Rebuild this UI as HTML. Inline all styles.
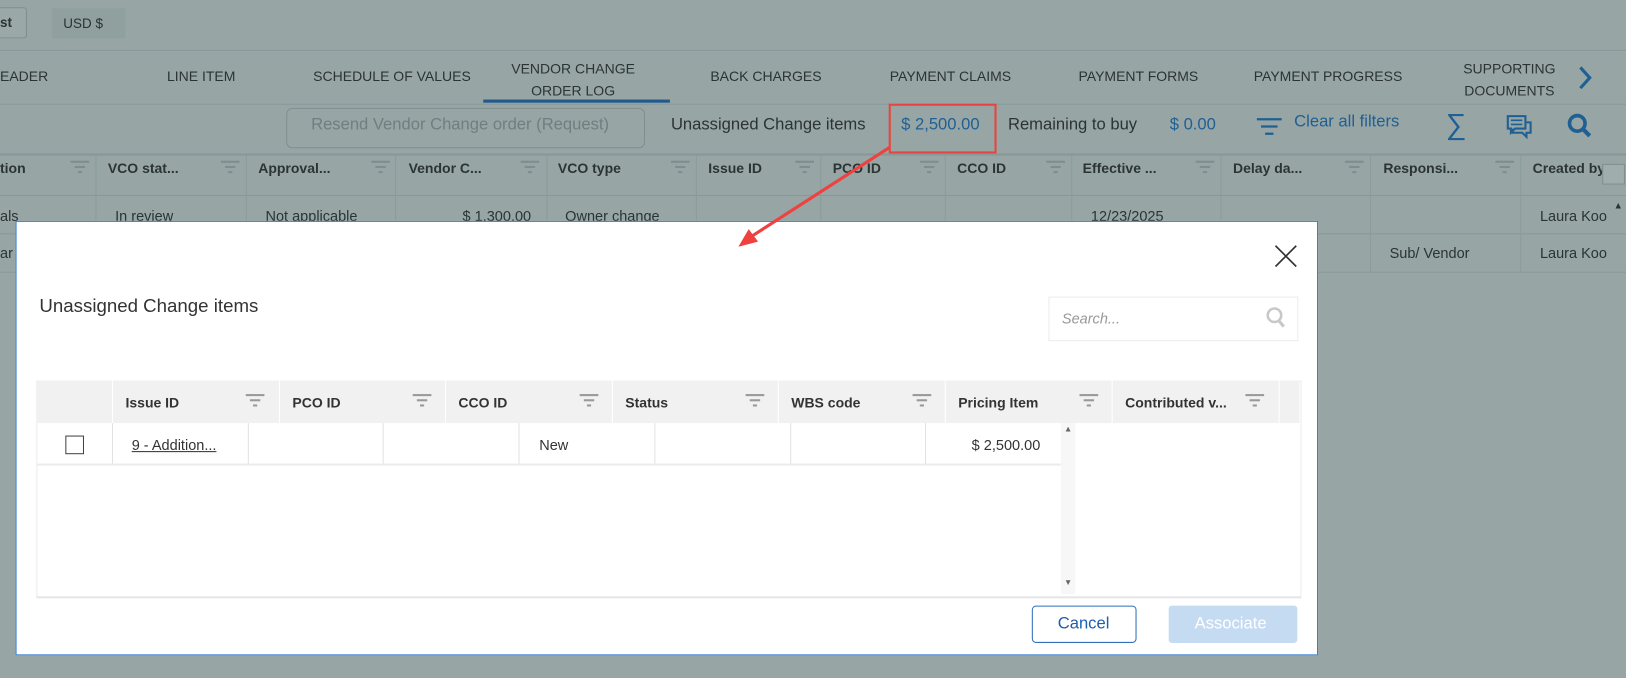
<!DOCTYPE html>
<html><head><meta charset="utf-8"><style>
html,body{margin:0;padding:0;width:1626px;height:678px;overflow:hidden;background:#97a6a5}
#w{position:absolute;left:0;top:0;width:1568px;height:654px;transform:scale(1.037);transform-origin:0 0;font-family:"Liberation Sans",sans-serif;color:#2b3333;font-size:14px}
.a{position:absolute;white-space:nowrap}
.hl{position:absolute;left:0;width:1568px;height:1px;background:#87989a}
.vl{position:absolute;width:1px;background:#8a9b9c}
.th{font-weight:bold;font-size:13.5px}
.fi{position:absolute;width:18px;height:12px}
.fi i{position:absolute;left:0;height:2px;background:#7e8e8e}
.m{position:absolute;left:15px;top:213px;width:1254px;height:417px;background:#fff;border:1px solid #3b7fd0}
.mv{position:absolute;width:1px;background:#e2e2e2}
.blue{color:#1f5f94}
</style></head><body><div id="w">
<div class="a" style="left:-10px;top:7px;width:34px;height:28px;border:1px solid #7f8f90;border-radius:3px;background:#9aa9a8"></div>
<div class="a th" style="left:0;top:14px;font-size:13px">st</div>
<div class="a" style="left:50px;top:8px;width:71px;height:29px;background:#8fa09f"></div>
<div class="a" style="left:61px;top:15px;font-size:13px">USD $</div>
<div class="hl" style="top:48px"></div>
<div class="a" style="left:0;top:66px;font-size:13.5px">EADER</div>
<div class="a" style="left:161px;top:66px;font-size:13.5px">LINE ITEM</div>
<div class="a" style="left:302px;top:66px;font-size:13.5px">SCHEDULE OF VALUES</div>
<div class="a" style="left:493px;top:56px;font-size:13.5px;text-align:center;line-height:21px">VENDOR CHANGE<br>ORDER LOG</div>
<div class="a" style="left:466px;top:96px;width:180px;height:3px;background:#22598a"></div>
<div class="a" style="left:685px;top:66px;font-size:13.5px">BACK CHARGES</div>
<div class="a" style="left:858px;top:66px;font-size:13.5px">PAYMENT CLAIMS</div>
<div class="a" style="left:1040px;top:66px;font-size:13.5px">PAYMENT FORMS</div>
<div class="a" style="left:1209px;top:66px;font-size:13.5px">PAYMENT PROGRESS</div>
<div class="a" style="left:1411px;top:56px;font-size:13.5px;text-align:center;line-height:21px">SUPPORTING<br>DOCUMENTS</div>
<svg class="a" style="left:1521px;top:63px" width="16" height="24"><path d="M3 2 L12 12 L3 22" stroke="#1f5f94" stroke-width="3" fill="none"/></svg>
<div class="hl" style="top:100px"></div>
<div class="a" style="left:276px;top:104px;width:344px;height:37px;border:1px solid #7f8f90;border-radius:6px"></div>
<div class="a" style="left:300px;top:112px;font-size:16px;color:#6f7f80">Resend Vendor Change order (Request)</div>
<div class="a" style="left:647px;top:112px;font-size:16px">Unassigned Change items</div>
<div class="a blue" style="left:869px;top:112px;font-size:16px">$ 2,500.00</div>
<div class="a" style="left:857px;top:100px;width:100px;height:44px;border:2px solid #e8443f"></div>
<div class="a" style="left:972px;top:112px;font-size:16px">Remaining to buy</div>
<div class="a blue" style="left:1128px;top:112px;font-size:16px">$ 0.00</div>
<svg class="a" style="left:1211px;top:112px" width="26" height="22"><path d="M1 3H25M5 10H21M9 17H17" stroke="#1f5f94" stroke-width="2.2"/></svg>
<div class="a blue" style="left:1248px;top:109px;font-size:16px">Clear all filters</div>
<div class="a blue" style="left:1394px;top:104px;font-size:28px">∑</div>
<svg class="a" style="left:1452px;top:110px" width="26" height="24"><path d="M2 2H19V14H9L5 18V14H2Z M7 14V18H16L20 22V18H24V8H19" stroke="#1f5f94" stroke-width="2" fill="none"/><path d="M5 6H16M5 10H16" stroke="#1f5f94" stroke-width="1.5"/></svg>
<svg class="a" style="left:1510px;top:108px" width="26" height="26"><circle cx="11" cy="11" r="7.5" stroke="#1f5f94" stroke-width="3.5" fill="none"/><path d="M16 16L23 23" stroke="#1f5f94" stroke-width="4"/></svg>
<div class="hl" style="top:148px;height:2px"></div>
<div class="hl" style="top:188px"></div>
<div class="hl" style="top:225px"></div>
<div class="hl" style="top:262px"></div>
<div class="vl" style="left:92px;top:150px;height:112px"></div><div class="vl" style="left:237px;top:150px;height:112px"></div><div class="vl" style="left:381px;top:150px;height:112px"></div><div class="vl" style="left:527px;top:150px;height:112px"></div><div class="vl" style="left:671px;top:150px;height:112px"></div><div class="vl" style="left:791px;top:150px;height:112px"></div><div class="vl" style="left:911px;top:150px;height:112px"></div><div class="vl" style="left:1033px;top:150px;height:112px"></div><div class="vl" style="left:1177px;top:150px;height:112px"></div><div class="vl" style="left:1321px;top:150px;height:112px"></div><div class="vl" style="left:1466px;top:150px;height:112px"></div>
<div class="a th" style="left:0;top:155px;line-height:16px"><span style="position:absolute;left:0;top:0">tion</span><span style="position:absolute;left:104px;top:0">VCO stat...</span><span style="position:absolute;left:249px;top:0">Approval...</span><span style="position:absolute;left:394px;top:0">Vendor C...</span><span style="position:absolute;left:538px;top:0">VCO type</span><span style="position:absolute;left:683px;top:0">Issue ID</span><span style="position:absolute;left:803px;top:0">PCO ID</span><span style="position:absolute;left:923px;top:0">CCO ID</span><span style="position:absolute;left:1044px;top:0">Effective ...</span><span style="position:absolute;left:1189px;top:0">Delay da...</span><span style="position:absolute;left:1334px;top:0">Responsi...</span><span style="position:absolute;left:1478px;top:0">Created by</span></div>
<div class="a" style="left:0;top:155px">
<div class="fi" style="left:68px"><i style="top:0;width:18px"></i><i style="top:5px;left:4px;width:10px"></i><i style="top:10px;left:7px;width:4px"></i></div>
<div class="fi" style="left:213px"><i style="top:0;width:18px"></i><i style="top:5px;left:4px;width:10px"></i><i style="top:10px;left:7px;width:4px"></i></div>
<div class="fi" style="left:358px"><i style="top:0;width:18px"></i><i style="top:5px;left:4px;width:10px"></i><i style="top:10px;left:7px;width:4px"></i></div>
<div class="fi" style="left:502px"><i style="top:0;width:18px"></i><i style="top:5px;left:4px;width:10px"></i><i style="top:10px;left:7px;width:4px"></i></div>
<div class="fi" style="left:647px"><i style="top:0;width:18px"></i><i style="top:5px;left:4px;width:10px"></i><i style="top:10px;left:7px;width:4px"></i></div>
<div class="fi" style="left:767px"><i style="top:0;width:18px"></i><i style="top:5px;left:4px;width:10px"></i><i style="top:10px;left:7px;width:4px"></i></div>
<div class="fi" style="left:887px"><i style="top:0;width:18px"></i><i style="top:5px;left:4px;width:10px"></i><i style="top:10px;left:7px;width:4px"></i></div>
<div class="fi" style="left:1009px"><i style="top:0;width:18px"></i><i style="top:5px;left:4px;width:10px"></i><i style="top:10px;left:7px;width:4px"></i></div>
<div class="fi" style="left:1153px"><i style="top:0;width:18px"></i><i style="top:5px;left:4px;width:10px"></i><i style="top:10px;left:7px;width:4px"></i></div>
<div class="fi" style="left:1297px"><i style="top:0;width:18px"></i><i style="top:5px;left:4px;width:10px"></i><i style="top:10px;left:7px;width:4px"></i></div>
<div class="fi" style="left:1442px"><i style="top:0;width:18px"></i><i style="top:5px;left:4px;width:10px"></i><i style="top:10px;left:7px;width:4px"></i></div>
</div>
<div class="a" style="left:1545px;top:158px;width:20px;height:18px;border:1px solid #7f8f90;background:#9fadac"></div>
<div class="a" style="left:0;top:200px">als</div><div class="a" style="left:111px;top:200px">In review</div><div class="a" style="left:256px;top:200px">Not applicable</div><div class="a" style="left:446px;top:200px">$ 1,300.00</div><div class="a" style="left:545px;top:200px">Owner change</div><div class="a" style="left:1052px;top:200px">12/23/2025</div><div class="a" style="left:1485px;top:200px">Laura Koo</div>
<div class="a" style="left:0;top:236px">ar</div><div class="a" style="left:1340px;top:236px">Sub/ Vendor</div><div class="a" style="left:1485px;top:236px">Laura Koo</div>
<div class="a" style="left:1556px;top:193px;font-size:9px">▲</div>
<div class="m">
<svg class="a" style="left:1213px;top:22px" width="22" height="22"><path d="M1 1L21 21M21 1L1 21" stroke="#333" stroke-width="1.6"/></svg>
<div class="a" style="left:22px;top:71px;font-size:18px;color:#333">Unassigned Change items</div>
<div class="a" style="left:995px;top:72px;width:239px;height:41px;border:1px solid #ececec"></div>
<div class="a" style="left:1008px;top:85px;font-style:italic;color:#999;font-size:14px">Search...</div>
<svg class="a" style="left:1205px;top:82px" width="20" height="22"><circle cx="8" cy="8" r="6.5" stroke="#c8c8c8" stroke-width="2.5" fill="none"/><path d="M12 13L17 19" stroke="#c8c8c8" stroke-width="3"/></svg>
<div class="a" style="left:19px;top:153px;width:1218px;height:207px;border:1px solid #ececec;border-bottom:2px solid #e6e6e6"></div>
<div class="a" style="left:20px;top:153px;width:1217px;height:41px;background:#f1f1f1"></div>
<div class="mv" style="left:92px;top:153px;height:41px;background:#fff"></div><div class="mv" style="left:253px;top:153px;height:41px;background:#fff"></div><div class="mv" style="left:413px;top:153px;height:41px;background:#fff"></div><div class="mv" style="left:574px;top:153px;height:41px;background:#fff"></div><div class="mv" style="left:734px;top:153px;height:41px;background:#fff"></div><div class="mv" style="left:895px;top:153px;height:41px;background:#fff"></div><div class="mv" style="left:1056px;top:153px;height:41px;background:#fff"></div><div class="mv" style="left:1217px;top:153px;height:41px;background:#fff"></div>
<div class="a th" style="left:0;top:167px;color:#333"><span style="position:absolute;left:105px">Issue ID</span><span style="position:absolute;left:266px">PCO ID</span><span style="position:absolute;left:426px">CCO ID</span><span style="position:absolute;left:587px">Status</span><span style="position:absolute;left:747px">WBS code</span><span style="position:absolute;left:908px">Pricing Item</span><span style="position:absolute;left:1069px">Contributed v...</span></div>
<div class="a" style="left:0;top:166px">
<div class="fi" style="left:221px"><i style="top:0;width:18px;background:#999"></i><i style="top:5px;left:4px;width:10px;background:#999"></i><i style="top:10px;left:7px;width:4px;background:#999"></i></div>
<div class="fi" style="left:382px"><i style="top:0;width:18px;background:#999"></i><i style="top:5px;left:4px;width:10px;background:#999"></i><i style="top:10px;left:7px;width:4px;background:#999"></i></div>
<div class="fi" style="left:543px"><i style="top:0;width:18px;background:#999"></i><i style="top:5px;left:4px;width:10px;background:#999"></i><i style="top:10px;left:7px;width:4px;background:#999"></i></div>
<div class="fi" style="left:703px"><i style="top:0;width:18px;background:#999"></i><i style="top:5px;left:4px;width:10px;background:#999"></i><i style="top:10px;left:7px;width:4px;background:#999"></i></div>
<div class="fi" style="left:864px"><i style="top:0;width:18px;background:#999"></i><i style="top:5px;left:4px;width:10px;background:#999"></i><i style="top:10px;left:7px;width:4px;background:#999"></i></div>
<div class="fi" style="left:1025px"><i style="top:0;width:18px;background:#999"></i><i style="top:5px;left:4px;width:10px;background:#999"></i><i style="top:10px;left:7px;width:4px;background:#999"></i></div>
<div class="fi" style="left:1185px"><i style="top:0;width:18px;background:#999"></i><i style="top:5px;left:4px;width:10px;background:#999"></i><i style="top:10px;left:7px;width:4px;background:#999"></i></div>
</div>
<div class="mv" style="left:92px;top:194px;height:40px"></div><div class="mv" style="left:223px;top:194px;height:40px"></div><div class="mv" style="left:353px;top:194px;height:40px"></div><div class="mv" style="left:484px;top:194px;height:40px"></div><div class="mv" style="left:615px;top:194px;height:40px"></div><div class="mv" style="left:746px;top:194px;height:40px"></div><div class="mv" style="left:876px;top:194px;height:40px"></div>
<div class="a" style="left:20px;top:233px;width:987px;height:2px;background:#ebebeb"></div>
<div class="a" style="left:1007px;top:194px;width:14px;height:165px;background:#f7f7f7"></div>
<div class="a" style="left:1010px;top:195px;font-size:8px;color:#666">▲</div>
<div class="a" style="left:1010px;top:343px;font-size:8px;color:#666">▼</div>
<div class="a" style="left:47px;top:206px;width:16px;height:16px;border:1.5px solid #444"></div>
<div class="a" style="left:111px;top:207px;text-decoration:underline;color:#333">9 - Addition...</div>
<div class="a" style="left:504px;top:207px;color:#333">New</div>
<div class="a" style="left:921px;top:207px;color:#333">$ 2,500.00</div>
<div class="a" style="left:979px;top:370px;width:99px;height:34px;border:1px solid #2f6fbb;border-radius:4px"></div>
<div class="a" style="left:1004px;top:379px;font-size:16px;color:#1d5fae">Cancel</div>
<div class="a" style="left:1111px;top:370px;width:124px;height:36px;background:#c5dbf2;border-radius:3px"></div>
<div class="a" style="left:1136px;top:379px;font-size:16px;color:#fff">Associate</div>
</div>
<svg class="a" style="left:700px;top:136px;overflow:visible" width="170" height="110"><path d="M158 6 L20 95" stroke="#ee4140" stroke-width="3"/><path d="M12 102 L31 97 L22 85Z" fill="#ee4140"/></svg>
</div></body></html>
